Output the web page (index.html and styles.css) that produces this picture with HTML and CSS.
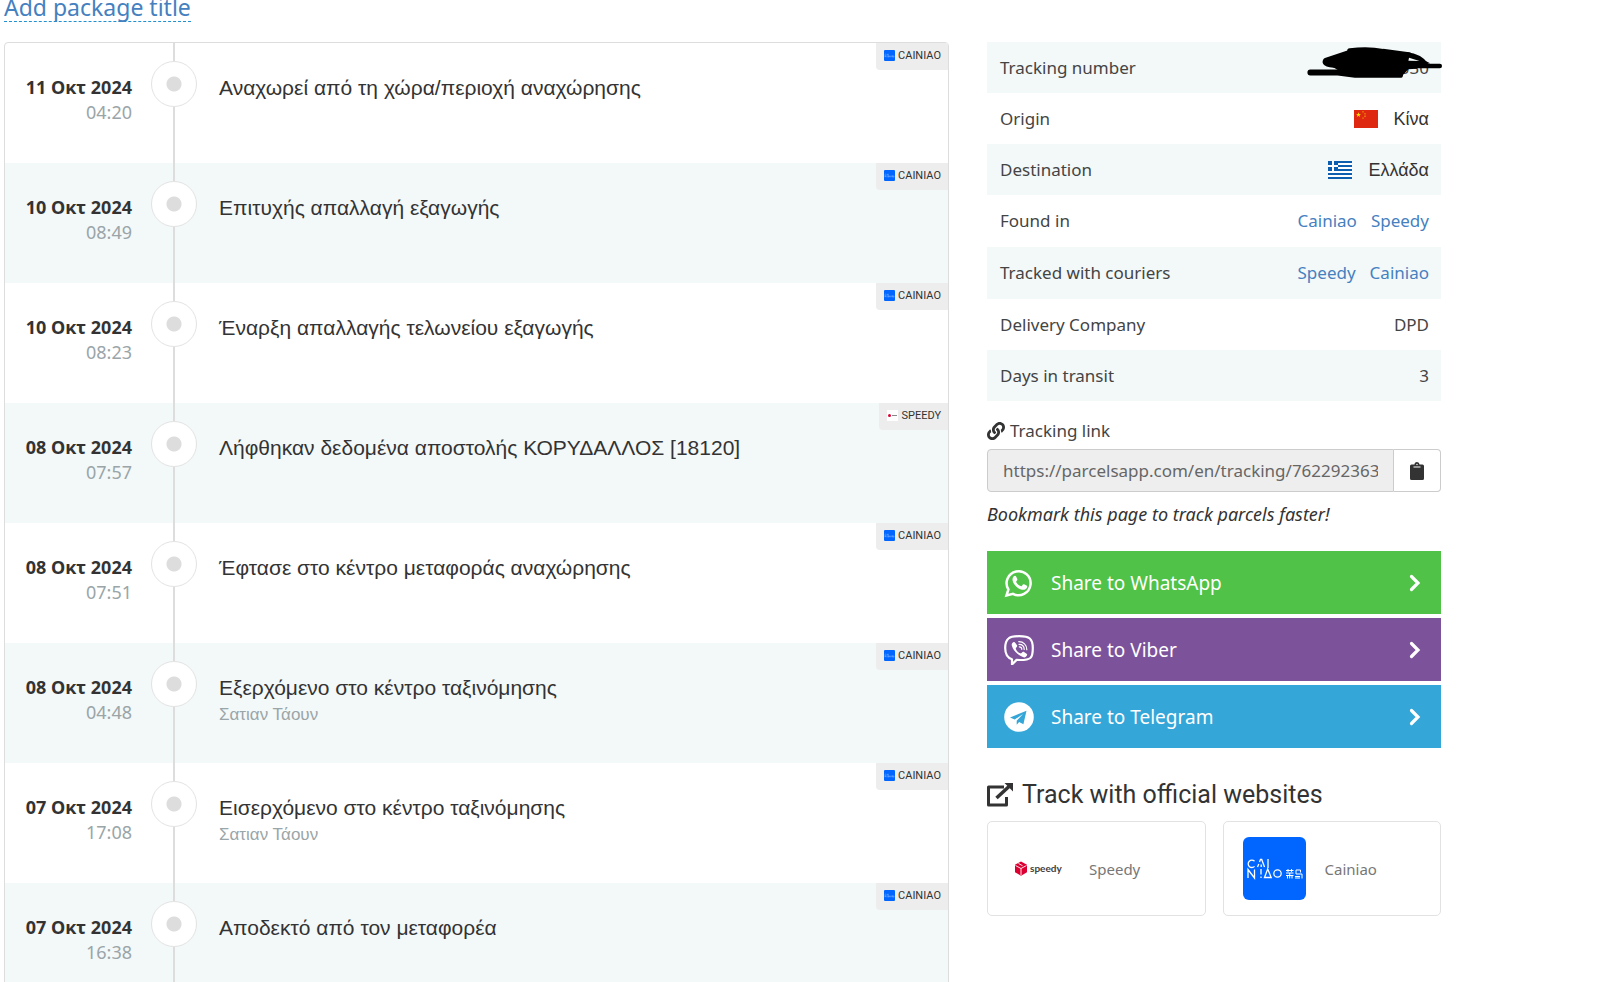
FILE: index.html
```html
<!DOCTYPE html>
<html lang="en">
<head>
<meta charset="utf-8">
<title>Parcel tracking</title>
<link rel="stylesheet" href="styles.css">
</head>
<body>
<svg class="sprite" aria-hidden="true">
  <symbol id="cainiao" viewBox="0 0 63 63">
    <rect width="63" height="63" rx="6" fill="#06f"/>
    <g fill="none" stroke="#fff" stroke-width="1.3">
      <path d="M11.500 24.200a3.700 3.700 0 1 0 0 5.200M14.500 30l1.300-3M16.500 25l1-2.500h1.200l2.800 7.500M18.200 27.500v2.500M25 22v9"/>
      <path d="M5 41v-8.500l6.500 8.500v-8.500M18 32v5.500M18 39.500v1.500M21.500 40.500l3.200-8.500 3.500 8.500z"/>
      <circle cx="34.500" cy="36.500" r="3.700"/>
      <path d="M43 33.500h7.500M45 32v3M48.500 32v3M43 36h7.500M43 38.500h7.500M46.700 36v5.500M44.500 39v2.500M49 39v2.500M53 37v-4h4.500v2.500M53 37h6v4.500M52 39.500h5M52 41h5" stroke-width="1"/>
    </g>
  </symbol>
  <symbol id="chevron" viewBox="0 0 12 18"><path d="M2.500 2.500 9 9l-6.500 6.500" fill="none" stroke="#fff" stroke-width="3.200" stroke-linecap="round"/></symbol>
</svg>

<main class="page">
  <section class="history">
    <a class="package-title" href="#">Add package title</a>
    <ol class="events">
      <li class="event">
        <div class="when"><strong>11 Οκτ 2024</strong><span>04:20</span></div>
        <div class="rail"><i class="dot"></i></div>
        <div class="what"><strong>Αναχωρεί από τη χώρα/περιοχή αναχώρησης</strong></div>
        <span class="carrier"><svg><use href="#cainiao"/></svg>CAINIAO</span>
      </li>
      <li class="event">
        <div class="when"><strong>10 Οκτ 2024</strong><span>08:49</span></div>
        <div class="rail"><i class="dot"></i></div>
        <div class="what"><strong>Επιτυχής απαλλαγή εξαγωγής</strong></div>
        <span class="carrier"><svg><use href="#cainiao"/></svg>CAINIAO</span>
      </li>
      <li class="event">
        <div class="when"><strong>10 Οκτ 2024</strong><span>08:23</span></div>
        <div class="rail"><i class="dot"></i></div>
        <div class="what"><strong>Έναρξη απαλλαγής τελωνείου εξαγωγής</strong></div>
        <span class="carrier"><svg><use href="#cainiao"/></svg>CAINIAO</span>
      </li>
      <li class="event">
        <div class="when"><strong>08 Οκτ 2024</strong><span>07:57</span></div>
        <div class="rail"><i class="dot"></i></div>
        <div class="what"><strong>Λήφθηκαν δεδομένα αποστολής ΚΟΡΥΔΑΛΛΟΣ [18120]</strong></div>
        <span class="carrier"><svg viewBox="0 0 11 11"><path fill="#fff" d="M0 0h11v11H0z"/><circle cx="2.500" cy="5.500" r="1.500" fill="#dc0032"/><path d="M5 5.500h5" stroke="#888"/></svg>SPEEDY</span>
      </li>
      <li class="event">
        <div class="when"><strong>08 Οκτ 2024</strong><span>07:51</span></div>
        <div class="rail"><i class="dot"></i></div>
        <div class="what"><strong>Έφτασε στο κέντρο μεταφοράς αναχώρησης</strong></div>
        <span class="carrier"><svg><use href="#cainiao"/></svg>CAINIAO</span>
      </li>
      <li class="event">
        <div class="when"><strong>08 Οκτ 2024</strong><span>04:48</span></div>
        <div class="rail"><i class="dot"></i></div>
        <div class="what"><strong>Εξερχόμενο στο κέντρο ταξινόμησης</strong><span>Σατιαν Τάουν</span></div>
        <span class="carrier"><svg><use href="#cainiao"/></svg>CAINIAO</span>
      </li>
      <li class="event">
        <div class="when"><strong>07 Οκτ 2024</strong><span>17:08</span></div>
        <div class="rail"><i class="dot"></i></div>
        <div class="what"><strong>Εισερχόμενο στο κέντρο ταξινόμησης</strong><span>Σατιαν Τάουν</span></div>
        <span class="carrier"><svg><use href="#cainiao"/></svg>CAINIAO</span>
      </li>
      <li class="event">
        <div class="when"><strong>07 Οκτ 2024</strong><span>16:38</span></div>
        <div class="rail"><i class="dot"></i></div>
        <div class="what"><strong>Αποδεκτό από τον μεταφορέα</strong></div>
        <span class="carrier"><svg><use href="#cainiao"/></svg>CAINIAO</span>
      </li>
    </ol>
  </section>

  <aside class="details">
    <table class="facts">
      <tr><th scope="row">Tracking number</th><td class="number">030
        <svg class="scribble" viewBox="0 0 423 150" aria-hidden="true">
          <path d="M80 48 142 25l60-3 40 4 60 10 55 15 20 10-60 14-20 22-100 1-60-1-30-18-30-18z"/>
          <g fill="none" stroke="#000" stroke-linecap="round" stroke-linejoin="round">
            <path stroke-width="17" d="M30 88h80l50 7h130M335 69l-95 6-110 3M145 26c40-5 70-3 95 2l75 10M140 32 75 54c-6 10 20 15 60 11l70-15"/>
            <path stroke-width="13" d="M405 69h-90M310 36c25 3 42 11 54 28"/>
          </g>
          <path d="m316 45 30 10-32-1z" fill="#f3f8f9"/>
        </svg></td></tr>
      <tr><th scope="row">Origin</th><td><span class="place">
        <svg class="flag" viewBox="0 0 24 18"><path fill="#de2910" d="M0 0h24v18H0z"/><path fill="#ffde00" d="m4.500 2.200.6 1.800H7L5.500 5.100 6 6.900 4.500 5.800 3 6.900l.5-1.800L2 4h1.900z"/><g fill="#ffde00"><circle cx="9" cy="1.800" r=".6"/><circle cx="11" cy="3.800" r=".6"/><circle cx="11" cy="6.200" r=".6"/><circle cx="9" cy="8" r=".6"/></g></svg>Κίνα</span></td></tr>
      <tr><th scope="row">Destination</th><td><span class="place">
        <svg class="flag" viewBox="0 0 24 18"><path fill="#fff" d="M0 0h24v18H0z"/><path fill="#0d5eaf" d="M0 0h24v2H0zm0 4h24v2H0zm0 4h24v2H0zm0 4h24v2H0zm0 4h24v2H0zM0 0h10v10H0z"/><path fill="#fff" d="M4 0h2v10H4zM0 4h10v2H0z"/></svg>Ελλάδα</span></td></tr>
      <tr class="tall"><th scope="row">Found in</th><td><a href="#">Cainiao</a><a href="#">Speedy</a></td></tr>
      <tr class="tall"><th scope="row">Tracked with couriers</th><td><a href="#">Speedy</a><a href="#">Cainiao</a></td></tr>
      <tr><th scope="row">Delivery Company</th><td>DPD</td></tr>
      <tr><th scope="row">Days in transit</th><td>3</td></tr>
    </table>

    <label class="link-label" for="tracking-link">
      <svg viewBox="0 0 512 512" aria-hidden="true"><path d="M326.612 185.391c59.747 59.809 58.927 155.698.36 214.590-.11.12-.24.25-.36.37l-67.200 67.200c-59.270 59.270-155.699 59.262-214.960 0-59.270-59.260-59.270-155.700 0-214.960l37.106-37.106c9.840-9.840 26.786-3.300 27.294 10.606.648 17.722 3.826 35.527 9.690 52.721 1.986 5.822.567 12.262-3.783 16.612l-13.087 13.087c-28.026 28.026-28.905 73.660-1.155 101.960 28.024 28.579 74.086 28.749 102.325.51l67.200-67.190c28.191-28.191 28.073-73.757 0-101.830-3.701-3.694-7.429-6.564-10.341-8.569a16.037 16.037 0 0 1-6.947-12.606c-.396-10.567 3.348-21.456 11.698-29.806l21.054-21.055c5.521-5.521 14.182-6.199 20.584-1.731a152.482 152.482 0 0 1 20.522 17.197zM467.547 44.449c-59.261-59.262-155.690-59.270-214.960 0l-67.200 67.200c-.12.12-.25.25-.36.37-58.566 58.892-59.387 154.781.36 214.590a152.454 152.454 0 0 0 20.521 17.196c6.402 4.468 15.064 3.789 20.584-1.731l21.054-21.055c8.350-8.350 12.094-19.239 11.698-29.806a16.037 16.037 0 0 0-6.947-12.606c-2.912-2.005-6.640-4.875-10.341-8.569-28.073-28.073-28.191-73.639 0-101.830l67.200-67.190c28.239-28.239 74.300-28.069 102.325.51 27.750 28.300 26.872 73.934-1.155 101.960l-13.087 13.087c-4.350 4.350-5.769 10.790-3.783 16.612 5.864 17.194 9.042 34.999 9.690 52.721.509 13.906 17.454 20.446 27.294 10.606l37.106-37.106c59.271-59.259 59.271-155.699.001-214.959z"/></svg>
      Tracking link
    </label>
    <div class="link-group">
      <input id="tracking-link" type="text" readonly value="https://parcelsapp.com/en/tracking/7622923635030">
      <button type="button" aria-label="Copy link"><svg viewBox="0 0 14 18"><path fill="#333" fill-rule="evenodd" d="M1.500 2.500h3a2.500 2.500 0 0 1 5 0h3A1.500 1.500 0 0 1 14 4v12.500a1.500 1.500 0 0 1-1.500 1.500h-11A1.500 1.500 0 0 1 0 16.500V4a1.500 1.500 0 0 1 1.500-1.500zM7 1.800a.7.700 0 1 0 0 1.400.7.700 0 0 0 0-1.400zM3.500 4.500v1h7v-1z"/></svg></button>
    </div>
    <p class="note">Bookmark this page to track parcels faster!</p>

    <div class="shares">
      <a class="share whatsapp" href="#">
        <svg class="logo" viewBox="0 0 30 30"><path d="M2.500 27.500 4.400 21.500A12 12 0 1 1 9 25.800z" fill="none" stroke="#fff" stroke-width="2.500"/><path fill="#fff" d="M9.800 8.200c.8-.7 1.900-.7 2.300.2l1.200 2.700c.3.700-.1 1.300-.9 2.200-.4.4-.2.800 0 1.100 1.100 1.700 2.500 2.900 4.300 3.700.5.200.8.100 1.100-.2l1.100-1.400c.4-.4.8-.4 1.200-.2l2.500 1.200c.8.400.8 1 .4 2-.7 1.900-3.100 2.700-5 2.200-5.100-1.300-9.100-5.700-9.500-9.600-.1-1.500.4-3 1.300-3.900z"/></svg>
        <span>Share to WhatsApp</span><svg class="arrow"><use href="#chevron"/></svg></a>
      <a class="share viber" href="#">
        <svg class="logo" viewBox="0 0 30 30"><path d="M15 1.200c-5 0-8.500.5-10.500 2.300C2 5.600 1.200 9 1.200 13c0 5.500 1.200 9.500 6.800 11.200V29.500l4.600-4.600c8.200.4 12-.4 14-2.200 2-1.900 2.200-5.700 2.200-9.700s-.6-7.400-3-9.500C23.800 1.700 20 1.200 15 1.200z" fill="none" stroke="#fff" stroke-width="2.200" stroke-linejoin="round"/><path fill="#fff" d="M8.200 8.200c1-1.300 2.200-1.500 3-.5l1.800 2.600c.5.800.2 1.500-.9 2.500-.5.500-.3 1 0 1.600 1 2 2.400 3.200 4.200 3.900.6.200.9 0 1.300-.4 1-1.300 1.800-1.400 2.800-.7l2.200 1.600c1 .7.700 1.600-.5 2.700-1 1-2 1.100-3.200.6C13 19.600 9.200 15.300 7.800 10.600c-.2-.9-.1-1.700.4-2.400z"/><path d="M14.800 6.700c4.700 0 8 3 8 8M15 9.300c3.200 0 5.200 2 5.200 5.200M15.300 11.800c1.500 0 2.500 1 2.500 2.500" fill="none" stroke="#fff" stroke-width="1.200" stroke-linecap="round"/></svg>
        <span>Share to Viber</span><svg class="arrow"><use href="#chevron"/></svg></a>
      <a class="share telegram" href="#">
        <svg class="logo" viewBox="0 0 30 30"><circle cx="15" cy="15" r="14.800" fill="#fff"/><path fill="#35a6d8" d="M22.500 8.800 6 15.400l4.700 2.200L19 12l-6.300 6.700v4l2.400-2.700 4.300 2.300z"/></svg>
        <span>Share to Telegram</span><svg class="arrow"><use href="#chevron"/></svg></a>
    </div>

    <h2 class="heading">
      <svg viewBox="0 0 26 24" aria-hidden="true"><path d="M17 4H1.500v18h18v-8" fill="none" stroke="#333" stroke-width="3" stroke-linejoin="round"/><path d="M9.500 15 22 3.500" stroke="#333" stroke-width="3.500"/><path d="M17.500 0H26v8.500z" fill="#333"/></svg>
      Track with official websites
    </h2>
    <div class="sites">
      <a class="site" href="#">
        <svg viewBox="0 0 63 63" aria-hidden="true"><path fill="#dc0032" d="m14 24.500 6 3.200v7.500l-6 3.500-6-3.500v-7.500z"/><path d="m8.500 28.500 5.500 3 5.500-3M14 31.500v6.500M11.500 26.500l4 2.200" stroke="#fff" stroke-width=".9" fill="none"/><text x="23" y="35" font-size="10" font-weight="700" font-family="Lato, sans-serif" fill="#414042">speedy</text></svg>
        Speedy</a>
      <a class="site" href="#">
        <svg aria-hidden="true"><use href="#cainiao"/></svg>
        Cainiao</a>
    </div>
  </aside>
</main>
</body>
</html>
```
FILE: styles.css
```css
* { box-sizing: border-box; }

body {
  margin: 0;
  background: #fff;
  color: #444;
  font-family: "Noto Sans", "Open Sans", sans-serif;
  font-size: 17px;
  line-height: 24px;
}

a { color: #4580bf; text-decoration: none; }

.sprite { display: none; }

.page {
  display: grid;
  grid-template-columns: minmax(0, 945fr) minmax(0, 454fr);
  gap: 38px;
  padding: 0 159px 0 4px;
}

.package-title {
  display: inline-block;
  vertical-align: top;
  padding-bottom: 7px;
  border-bottom: 1px dashed #2090d0;
  font-size: 23px;
  line-height: 14px;
}

/* Event timeline */
.events {
  list-style: none;
  margin: 18px 0 0;
  padding: 0;
  border: 1px solid #ddd;
  border-radius: 4px;
}

.event {
  position: relative;
  display: grid;
  grid-template-columns: 127px 84px 1fr;
  min-height: 120px;
}

.event:nth-child(even) { background: #f3f8f9; }

.when {
  display: flex;
  flex-direction: column;
  padding-top: 32px;
  text-align: right;
  font-size: 18px;
  line-height: 25px;
}

.when strong { color: #333; }
.when span { color: #9aa5a8; }

.rail {
  display: flex;
  flex-direction: column;
  align-items: center;
}

.rail::before,
.rail::after {
  content: "";
  width: 2px;
  background: #ddd;
}

.rail::before { height: 18px; }
.rail::after { flex: 1; }

.dot {
  width: 46px;
  height: 46px;
  border: 1px solid #e3e3e3;
  border-radius: 50%;
  background: radial-gradient(circle, #ddd 7px, #fff 8px);
}

.what {
  display: flex;
  flex-direction: column;
  padding: 32px 0 0 3px;
  font-family: "Liberation Sans", sans-serif;
}

.what strong {
  color: #333;
  font-size: 21px;
  font-weight: 400;
  line-height: 26px;
}

.what span { color: #9aa5a8; line-height: 28px; }

.carrier {
  position: absolute;
  top: 0;
  right: 0;
  display: flex;
  align-items: center;
  gap: 3px;
  height: 27px;
  padding: 0 7px 2px 8px;
  border-bottom-left-radius: 4px;
  background: #ededed;
  color: #333;
  font-family: Roboto, sans-serif;
  font-size: 11px;
}

.carrier svg { width: 11px; height: 11px; }

/* Parcel facts */
.details { padding-top: 42px; }

.facts {
  width: 100%;
  border-collapse: collapse;
}

.facts tr { height: 51px; }
.facts .tall { height: 52px; }
.facts tr:nth-child(odd) { background: #f3f8f9; }

.facts th,
.facts td { padding: 0 12px 0 13px; }

.facts th { text-align: left; font-weight: 400; }
.facts td { text-align: right; }
.facts a + a { margin-left: 14px; }

.number { position: relative; }

.scribble {
  position: absolute;
  top: 0;
  right: -5px;
  width: 146px;
  height: 52px;
}

.place {
  display: inline-flex;
  align-items: center;
  vertical-align: middle;
  gap: 16px;
  color: #333;
  font-family: "Liberation Sans", sans-serif;
  font-size: 18px;
}

.flag { height: 18px; width: 24px; }

/* Tracking link */
.link-label {
  display: flex;
  align-items: center;
  gap: 5px;
  margin-top: 17px;
  line-height: 26px;
}

.link-label svg { width: 18px; height: 18px; fill: #333; }

.link-group {
  display: flex;
  height: 43px;
  margin-top: 5px;
}

.link-group input {
  flex: 1;
  min-width: 0;
  padding: 0 15px;
  border: 1px solid #ccc;
  border-radius: 4px 0 0 4px;
  background: #eee;
  color: #666;
  font: inherit;
}

.link-group button {
  display: flex;
  align-items: center;
  justify-content: center;
  width: 47px;
  border: 1px solid #ccc;
  border-left: 0;
  border-radius: 0 4px 4px 0;
  background: #fff;
}

.link-group button svg { width: 14px; height: 18px; }

.note {
  margin: 10px 0 25px;
  color: #333;
  font-size: 18px;
  font-style: italic;
}

/* Share buttons */
.shares { display: grid; gap: 4px; }

.share {
  display: flex;
  align-items: center;
  gap: 17px;
  height: 63px;
  padding: 0 20px 0 17px;
  color: #fff;
  font-size: 19px;
}

.share span { flex: 1; }
.logo { width: 30px; height: 30px; }
.arrow { width: 12px; height: 18px; }
.whatsapp { background: #4fc247; }
.viber { background: #7c529b; }
.telegram { background: #35a6d8; }

/* Official websites */
.heading {
  display: flex;
  align-items: center;
  gap: 9px;
  margin: 32px 0 11px;
  color: #333;
  font-family: Roboto, sans-serif;
  font-size: 25px;
  font-weight: 400;
  line-height: 30px;
}

.heading svg { width: 26px; height: 24px; }

.sites {
  display: grid;
  grid-template-columns: 1fr 1fr;
  gap: 17px;
}

.site {
  display: flex;
  align-items: center;
  gap: 19px;
  height: 95px;
  padding: 0 19px;
  border: 1px solid #e2e2e2;
  border-radius: 5px;
  color: #777;
  font-size: 15px;
}

.site svg { width: 63px; height: 63px; }
```
